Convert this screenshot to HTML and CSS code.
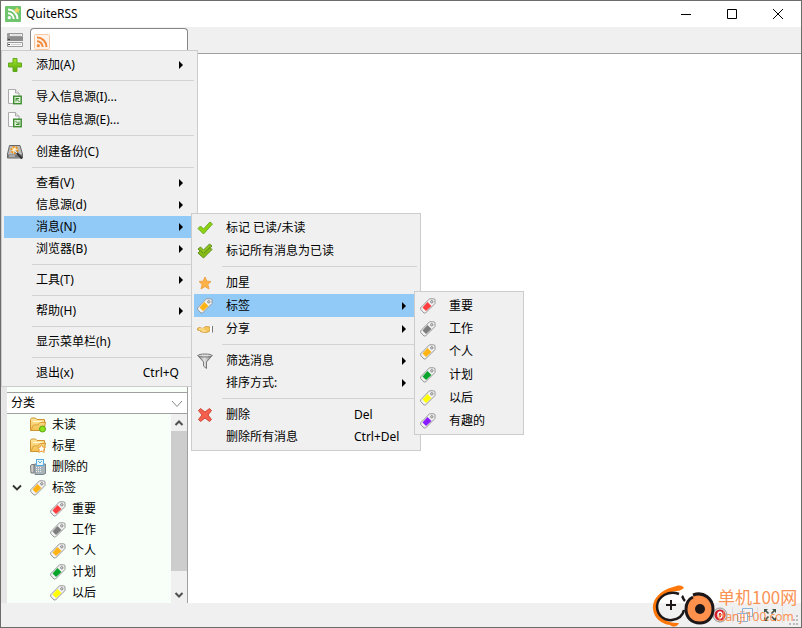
FILE: index.html
```html
<!DOCTYPE html>
<html lang="zh-CN">
<head>
<meta charset="utf-8">
<title>QuiteRSS</title>
<link rel="stylesheet" href="styles.css">
</head>
<body>
<svg class="defs" aria-hidden="true">
  <defs>
    <linearGradient id="g-green" x1="0" y1="0" x2="0" y2="1"><stop offset="0" stop-color="#a5e32a"/><stop offset="1" stop-color="#55a80b"/></linearGradient>
    <linearGradient id="g-metal" x1="0" y1="0" x2="1" y2="0"><stop offset="0" stop-color="#777"/><stop offset=".45" stop-color="#e4e4e4"/><stop offset="1" stop-color="#777"/></linearGradient>
    <linearGradient id="g-folder" x1="0" y1="0" x2="0" y2="1"><stop offset="0" stop-color="#ffe7a0"/><stop offset="1" stop-color="#f3c04c"/></linearGradient>
    <symbol id="tag" viewBox="0 0 16 16">
      <path d="M9.500 .8H13.500L15 1.500V5.500L5.500 15H4L.7 11.500V9.800Z" fill="#f2f2f2" stroke="#969696" stroke-linejoin="round"/>
      <path d="M7.500 4L11.500 8L6 13L2.500 9.500Z" fill="currentColor"/>
      <circle cx="11.800" cy="3.800" r="1.200" fill="#ddd" stroke="#888"/>
    </symbol>
    <symbol id="doc" viewBox="0 0 16 16">
      <path d="M1.500 .5H8.500L12 4V14.500H1.500Z" fill="#fafafa" stroke="#aaa"/>
      <path d="M8.500 .5V4H12" fill="#e8e8e8" stroke="#aaa"/>
      <rect x="6.700" y="7.200" width="7.500" height="7.500" fill="#dff0d8" stroke="#3b8a2c" stroke-width="1.400"/>
    </symbol>
    <symbol id="folder" viewBox="0 0 16 16">
      <path d="M.5 2.500L1.500 1H5.500L7 2.500H14.500V5H15.500L14 13.500H.5Z" fill="url(#g-folder)" stroke="#cf9431"/>
      <path d="M1 13L3.500 8H8L10 5.500H15" fill="none" stroke="#d9a23e"/>
      <path d="M3 4.500H12" stroke="#fff7d4"/>
    </symbol>
    <symbol id="arrow" viewBox="0 0 4 8"><path d="M0 0L4 4L0 8Z" fill="#000"/></symbol>
    <symbol id="rss" viewBox="0 0 16 16">
      <circle cx="4.300" cy="11.700" r="1.600" fill="currentColor"/>
      <path d="M3 7.300A5.700 5.700 0 0 1 8.700 13M3 3.500A9.500 9.500 0 0 1 12.500 13" fill="none" stroke="currentColor" stroke-width="2"/>
    </symbol>
  </defs>
</svg>

<div class="window">
  <header class="titlebar">
    <svg class="icon" viewBox="0 0 16 16"><rect width="16" height="16" rx="1" fill="#6fc56e"/><use href="#rss" color="#fff"/><path d="M12 1L13 3L15 3.500L13.500 5L14 7L12 6L10 7L10.500 5L9 3.500L11 3Z" fill="#f5d75f"/></svg>
    <h1>QuiteRSS</h1>
    <div class="window-buttons">
      <button aria-label="最小化"><svg viewBox="0 0 12 12"><path d="M1 6.500H11" /></svg></button>
      <button aria-label="最大化"><svg viewBox="0 0 12 12"><path d="M1.500 1.500H10.500V10.500H1.500Z"/></svg></button>
      <button aria-label="关闭"><svg viewBox="0 0 12 12"><path d="M1 1L11 11M11 1L1 11"/></svg></button>
    </div>
  </header>

  <div class="toolbar">
    <div class="menu-anchor">
      <button class="menu-button" aria-label="菜单"><svg class="icon" viewBox="0 0 16 16"><path d="M.5 1.500H15.500V4.500H.5ZM.5 10.500H15.500V14.500H.5Z" fill="#fafafa" stroke="#999"/><path d="M0 5H16V9H0Z" fill="#8c8c8c"/><path d="M1 3H3M1 7.500H3M1 12.500H3" stroke="#444"/><path d="M4 3H14M4 12.500H14" stroke="#ccc"/></svg></button>
      <ul class="menu menu-main">
        <li><button class="item has-icon"><svg class="icon" viewBox="0 0 16 16"><path d="M6 1.500H10V6H14.500V10H10V14.500H6V10H1.500V6H6Z" fill="url(#g-green)" stroke="#62a91c" stroke-linejoin="round"/></svg><span>添加(A)</span><svg class="arrow"><use href="#arrow"/></svg></button></li>
        <li class="sep"></li>
        <li><button class="item has-icon"><svg class="icon" viewBox="0 0 16 16"><use href="#doc"/><path d="M12.500 13L9 9.500M9 12.500V9.500H12" stroke="#3b8a2c" fill="none"/></svg><span>导入信息源(I)...</span></button></li>
        <li><button class="item has-icon"><svg class="icon" viewBox="0 0 16 16"><use href="#doc"/><path d="M8.500 9L12 12.500M12 9.500V12.500H9" stroke="#3b8a2c" fill="none"/></svg><span>导出信息源(E)...</span></button></li>
        <li class="sep"></li>
        <li><button class="item has-icon"><svg class="icon" viewBox="0 0 16 16"><path d="M2.500 1.500H13L15.500 10V14H.5V10Z" fill="#bcbcbc" stroke="#666"/><path d="M1 10.500H15V13.500H1Z" fill="#777"/><path d="M2 12H8" stroke="#ddd"/><circle cx="7.500" cy="6" r="3" fill="#fff3d0" stroke="#ee961f" stroke-width="2.200" stroke-dasharray="2 1"/><path d="M8 7L15 14.500" stroke="#333" stroke-width="2"/><path d="M7.500 6.500L10 9" stroke="#eee" stroke-width="1.500"/></svg><span>创建备份(C)</span></button></li>
        <li class="sep"></li>
        <li><button class="item"><span>查看(V)</span><svg class="arrow"><use href="#arrow"/></svg></button></li>
        <li><button class="item"><span>信息源(d)</span><svg class="arrow"><use href="#arrow"/></svg></button></li>
        <li><button class="item active"><span>消息(N)</span><svg class="arrow"><use href="#arrow"/></svg></button>
          <ul class="menu menu-news">
            <li><button class="item has-icon"><svg class="icon" viewBox="0 0 16 16"><path d="M1 8.500L3.500 6L6.500 9L13 2L15.500 4L6.500 14Z" fill="#8ed310" stroke="#6fa92a" stroke-linejoin="round"/></svg><span>标记 已读/未读</span></button></li>
            <li><button class="item has-icon"><svg class="icon" viewBox="0 0 16 16"><path d="M1 6L3.500 4L6.500 7L12.500 1L15 3L6.500 11Z" fill="#8fc41d" stroke="#5f8d20" stroke-linejoin="round"/><path d="M1 10L3.500 7.500L6.500 10.500L13 4.500L15 6.500L6.500 15Z" fill="#86bd14" stroke="#5f8d20" stroke-linejoin="round"/></svg><span>标记所有消息为已读</span></button></li>
            <li class="sep"></li>
            <li><button class="item has-icon"><svg class="icon" viewBox="0 0 16 16"><path d="M8 2L9.800 6.200L14 6.500L10.800 9.400L12 14L8 11.500L4 14L5.200 9.400L2 6.500L6.200 6.200Z" fill="#ffb347" stroke="#eda242" stroke-linejoin="round"/></svg><span>加星</span></button></li>
            <li><button class="item has-icon active"><svg class="icon c-orange"><use href="#tag"/></svg><span>标签</span><svg class="arrow"><use href="#arrow"/></svg></button>
              <ul class="menu menu-labels">
                <li><button class="item has-icon"><svg class="icon c-red"><use href="#tag"/></svg><span>重要</span></button></li>
                <li><button class="item has-icon"><svg class="icon c-gray"><use href="#tag"/></svg><span>工作</span></button></li>
                <li><button class="item has-icon"><svg class="icon c-orange"><use href="#tag"/></svg><span>个人</span></button></li>
                <li><button class="item has-icon"><svg class="icon c-green"><use href="#tag"/></svg><span>计划</span></button></li>
                <li><button class="item has-icon"><svg class="icon c-yellow"><use href="#tag"/></svg><span>以后</span></button></li>
                <li><button class="item has-icon"><svg class="icon c-purple"><use href="#tag"/></svg><span>有趣的</span></button></li>
              </ul>
            </li>
            <li><button class="item has-icon"><svg class="icon" viewBox="0 0 16 16"><path d="M.5 7.500L2 6.500L6 7.500L8.500 5.500L13 6V10L9.500 11.500L4.500 11L2.500 9.500L.5 9Z" fill="#f4c65c" stroke="#cf9332" stroke-width=".8" stroke-linejoin="round"/><path d="M2 8H7M5 10H9" stroke="#fff0b0"/><path d="M13 5.500H14.500V11H13Z" fill="#fff"/><path d="M15.500 5V11.500" stroke="#777"/></svg><span>分享</span><svg class="arrow"><use href="#arrow"/></svg></button></li>
            <li class="sep"></li>
            <li><button class="item has-icon"><svg class="icon" viewBox="0 0 16 16"><path d="M.8 2.500L6.500 9V13L9.500 15.500V9L15.200 2.500Z" fill="url(#g-metal)" stroke="#777" stroke-linejoin="round"/><ellipse cx="8" cy="2.500" rx="7" ry="1.500" fill="#ddd" stroke="#777"/></svg><span>筛选消息</span><svg class="arrow"><use href="#arrow"/></svg></button></li>
            <li><button class="item"><span>排序方式:</span><svg class="arrow"><use href="#arrow"/></svg></button></li>
            <li class="sep"></li>
            <li><button class="item has-icon"><svg class="icon" viewBox="0 0 16 16"><path d="M1.500 3.500L3.500 1.500L8 5L12.500 1.500L14.500 3.500L11 8L14.500 12.500L12.500 14.500L8 11L3.500 14.500L1.500 12.500L5 8Z" fill="#f4604d" stroke="#ce4636" stroke-linejoin="round"/></svg><span>删除</span><kbd>Del</kbd></button></li>
            <li><button class="item"><span>删除所有消息</span><kbd>Ctrl+Del</kbd></button></li>
          </ul>
        </li>
        <li><button class="item"><span>浏览器(B)</span><svg class="arrow"><use href="#arrow"/></svg></button></li>
        <li class="sep"></li>
        <li><button class="item"><span>工具(T)</span><svg class="arrow"><use href="#arrow"/></svg></button></li>
        <li class="sep"></li>
        <li><button class="item"><span>帮助(H)</span><svg class="arrow"><use href="#arrow"/></svg></button></li>
        <li class="sep"></li>
        <li><button class="item"><span>显示菜单栏(h)</span></button></li>
        <li class="sep"></li>
        <li><button class="item"><span>退出(x)</span><kbd>Ctrl+Q</kbd></button></li>
      </ul>
    </div>
    <button class="tab" aria-label="新闻"><svg class="icon" viewBox="0 0 16 16"><rect x=".5" y=".5" width="15" height="15" rx="1" fill="#fff2e8" stroke="#f6c9a6"/><use href="#rss" color="#f08a3c"/></svg></button>
  </div>

  <div class="body">
    <aside class="sidebar">
      <div class="feeds"></div>
      <div class="category">
        <select aria-label="分类"><option>分类</option></select>
        <svg class="chevron" viewBox="0 0 12 8"><path d="M1 1L6 6.500L11 1" fill="none" stroke="#888"/></svg>
      </div>
      <div class="tree-pane">
        <ul class="tree">
          <li><svg class="icon" viewBox="0 0 16 16"><use href="#folder"/><circle cx="12.500" cy="12" r="3" fill="#8be31a" stroke="#5ca616"/></svg>未读</li>
          <li><svg class="icon" viewBox="0 0 16 16"><use href="#folder"/><path d="M11.500 6.500L12.800 9.200L15.500 9.500L13.600 11.500L14.200 14.500L11.500 13L8.800 14.500L9.400 11.500L7.500 9.500L10.200 9.200Z" fill="#fff" stroke="#f0a545"/></svg>标星</li>
          <li><svg class="icon" viewBox="0 0 16 16"><path d="M1.500 5.500H4V14H1L.5 7Z" fill="#ccc" stroke="#777"/><path d="M4.500 5H15.500V14.500L13 15.500H5Z" fill="#a8b3ba" stroke="#7b8589"/><rect x="6.500" y=".5" width="7" height="6" fill="#eaf7ff" stroke="#56a9dc"/><path d="M8 2L10 4L12 2" fill="none" stroke="#56a9dc"/><path d="M6 8.500H11M6 10.500H11M6 12.500H11" stroke="#eee" stroke-dasharray="1 1"/></svg>删除的</li>
          <li class="open"><svg class="expander" viewBox="0 0 10 8"><path d="M1 1.500L5 5.500L9 1.500" fill="none" stroke="#333" stroke-width="1.800"/></svg><svg class="icon c-orange"><use href="#tag"/></svg>标签</li>
          <li class="child"><svg class="icon c-red"><use href="#tag"/></svg>重要</li>
          <li class="child"><svg class="icon c-gray"><use href="#tag"/></svg>工作</li>
          <li class="child"><svg class="icon c-orange"><use href="#tag"/></svg>个人</li>
          <li class="child"><svg class="icon c-green"><use href="#tag"/></svg>计划</li>
          <li class="child"><svg class="icon c-yellow"><use href="#tag"/></svg>以后</li>
        </ul>
        <div class="scrollbar">
          <button aria-label="向上"><svg viewBox="0 0 10 8"><path d="M1.500 6L5 2.500L8.500 6"/></svg></button>
          <div class="track"><div class="thumb"></div></div>
          <button aria-label="向下"><svg viewBox="0 0 10 8"><path d="M1.500 2L5 5.500L8.500 2"/></svg></button>
        </div>
      </div>
    </aside>
    <main class="content"></main>
  </div>

  <footer class="statusbar">
    <button aria-label="广告拦截"><svg class="icon" viewBox="0 0 16 16"><circle cx="8" cy="8" r="7" fill="#ddd" stroke="#999"/><circle cx="8" cy="8" r="5.500" fill="#d41c2c"/><ellipse cx="8" cy="8" rx="2" ry="3" fill="none" stroke="#fff" stroke-width="1.500"/></svg></button>
    <button aria-label="布局"><svg class="icon" viewBox="0 0 16 16"><path d="M5.500 1.500H15.500V9.500H5.500Z" fill="#f4f4f4" stroke="#8eb0d4"/><path d="M.5 6.500H10.500V14.500H.5Z" fill="#fafafa" stroke="#8eb0d4"/><path d="M3 10.500H8M9 5.500H13" stroke="#bbb"/></svg></button>
    <button aria-label="全屏"><svg class="icon" viewBox="0 0 16 16"><path d="M2 6V2H6ZM10 2H14V6ZM2 10V14H6ZM14 10V14H10Z" fill="#415447"/><path d="M3 3L6.500 6.500M13 3L9.500 6.500M3 13L6.500 9.500M13 13L9.500 9.500" stroke="#415447" stroke-width="1.600"/></svg></button>
    <svg class="grip" viewBox="0 0 10 10"><path d="M7 0H9V2H7ZM4 4H6V6H4ZM7 4H9V6H7ZM0 8H2V10H0ZM4 8H6V10H4ZM7 8H9V10H7Z" fill="#bbb"/></svg>
  </footer>

  <div class="brand">
    <svg viewBox="0 0 64 42">
      <path d="M32 3C30 -.5 26 0 21 2C7 6 0 15 1 24C2 33 9 39 18 40C22 43 26 41 27 38C16 39 7 33 5 24C4 14 14 7 25 6C28 6 30 4 32 3Z" fill="#ff7609"/>
      <path d="M27 9C17 5 6 11 5 21C5 31 13 36 20 35C27 34 31 30 32 25" fill="none" stroke="#1d1719" stroke-width="2.500"/>
      <path d="M30 11C31 12 31 14 33 16" fill="none" stroke="#1d1719" stroke-width="2.500"/>
      <path d="M19 15V25M14 20H24" stroke="#1d1719" stroke-width="2"/>
      <path d="M41 10C52 6 61 14 61 24C61 33 55 38 48 38C39 38 34 32 34 24C34 18 37 14 41 12" fill="#ff914d" stroke="#1d1719" stroke-width="3"/>
      <circle cx="48" cy="24" r="5" fill="#1d1719"/>
    </svg>
    <div class="brand-text"><strong>单机100网</strong><span>danji100.com</span></div>
  </div>
</div>
</body>
</html>
```
FILE: styles.css
```css
* { box-sizing: border-box; }

body {
  margin: 0;
  font: 12px/20px "Noto Sans", "Noto Sans CJK SC", sans-serif;
  color: #000;
}

ul { list-style: none; margin: 0; padding: 0; }

button {
  border: 0;
  padding: 0;
  background: none;
  font: inherit;
  color: inherit;
}

svg { display: block; }
.defs { position: absolute; width: 0; height: 0; }
.icon { width: 16px; height: 16px; flex: none; }

.c-red { color: #ff3f3f; }
.c-gray { color: #7d7d7d; }
.c-orange { color: #ffb416; }
.c-green { color: #08a42c; }
.c-yellow { color: #ffff00; }
.c-purple { color: #8a1cff; }

.window {
  position: relative;
  display: flex;
  flex-direction: column;
  min-height: 100vh;
  border: 1px solid #6e6b6b;
  background: #f0f0f0;
}

/* Title bar */
.titlebar {
  display: flex;
  align-items: center;
  gap: 5px;
  height: 26px;
  padding-left: 4px;
  background: #fff;
}
.titlebar h1 { margin: 0; font-size: 12px; font-weight: 400; }
.window-buttons { display: flex; margin-left: auto; }
.window-buttons button {
  display: grid;
  place-items: center;
  width: 46px;
  height: 26px;
}
.window-buttons svg { width: 12px; height: 12px; fill: none; stroke: #000; }

/* Toolbar */
.toolbar { display: flex; height: 26px; padding-top: 1px; }
.menu-anchor { position: relative; width: 29px; }
.menu-button { display: block; padding: 4px 6px; }
.tab {
  width: 158px;
  padding: 5px 3px;
  border: 1px solid #868686;
  border-bottom: 0;
  border-radius: 4px 4px 0 0;
  background: #fff;
}

/* Menus */
.menu {
  position: absolute;
  z-index: 2;
  padding: 2px;
  border: 1px solid #ccc;
  background: #f0f0f0;
}
.menu-main { top: 22px; left: 0; width: 197px; }
.menu-main > li { position: relative; }
.menu-news > li { position: relative; }
.menu-news, .menu-labels { top: -3px; left: calc(100% - 4px); }
.menu-news { width: 230px; }
.menu-labels { width: 110px; }

.item {
  display: flex;
  align-items: center;
  width: 100%;
  height: 22px;
  padding-left: 32px;
  text-align: left;
  white-space: nowrap;
}
.item.has-icon { height: 23px; padding-left: 3px; gap: 13px; }
.item.active { background: #91c9f7; }
.item kbd { min-width: 48px; margin: 0 16px 0 auto; font: inherit; }
.menu-main > li > .item kbd { min-width: 0; }
.arrow { width: 4px; height: 8px; margin: 0 12px 0 auto; }
.sep { height: 9px; padding: 4px 1px 4px 28px; }
.sep::before { content: ""; display: block; height: 1px; background: #d3d3d3; }

/* Main area */
.body { display: flex; flex: 1; }
.sidebar {
  display: flex;
  flex-direction: column;
  width: 187px;
  padding-left: 6px;
  border-right: 1px solid #a0a0a0;
  background: #e6e6e6;
}
.feeds { flex: 1; background: #f8fff8; }
.content { flex: 1; border-top: 1px solid #a0a0a0; background: #fff; }

.category {
  position: relative;
  border: solid #a0a0a0;
  border-width: 1px 0;
  background: #fff;
}
.category select {
  display: block;
  width: 100%;
  height: 20px;
  padding: 0 4px;
  border: 0;
  appearance: none;
  background: none;
  font: inherit;
  color: inherit;
}
.chevron {
  position: absolute;
  top: 7px;
  right: 4px;
  width: 12px;
  height: 8px;
  pointer-events: none;
}

.tree-pane { display: flex; }
.tree { flex: 1; background: #f8fff8; }
.tree li {
  display: flex;
  align-items: center;
  gap: 6px;
  height: 21px;
  padding-left: 23px;
}
.tree .open { padding-left: 5px; }
.tree .child { padding-left: 43px; }
.expander { width: 10px; height: 8px; margin-right: 2px; }

.scrollbar { display: flex; flex-direction: column; width: 16px; background: #f0f0f0; }
.scrollbar button { display: grid; place-items: center; height: 17px; }
.scrollbar svg { width: 10px; height: 8px; fill: none; stroke: #505050; stroke-width: 2; }
.track { flex: 1; }
.thumb { height: 90%; background: #cdcdcd; }

/* Status bar */
.statusbar {
  display: flex;
  align-items: center;
  justify-content: flex-end;
  height: 24px;
}
.statusbar button { padding: 0 4px; border-right: 1px solid #ddd; }
.grip { align-self: flex-end; width: 10px; height: 10px; margin: 0 2px 2px 6px; }

.brand {
  position: absolute;
  right: 2px;
  bottom: 0;
  z-index: 1;
  display: flex;
  gap: 2px;
  color: #fa9255;
  pointer-events: none;
}
.brand svg { width: 64px; height: 42px; }
.brand-text { display: flex; flex-direction: column; width: 81px; white-space: nowrap; }
.brand-text strong { font: 400 17px/24px "Noto Sans CJK SC", sans-serif; }
.brand-text span { font: 12px/16px "Noto Sans", sans-serif; }
```
